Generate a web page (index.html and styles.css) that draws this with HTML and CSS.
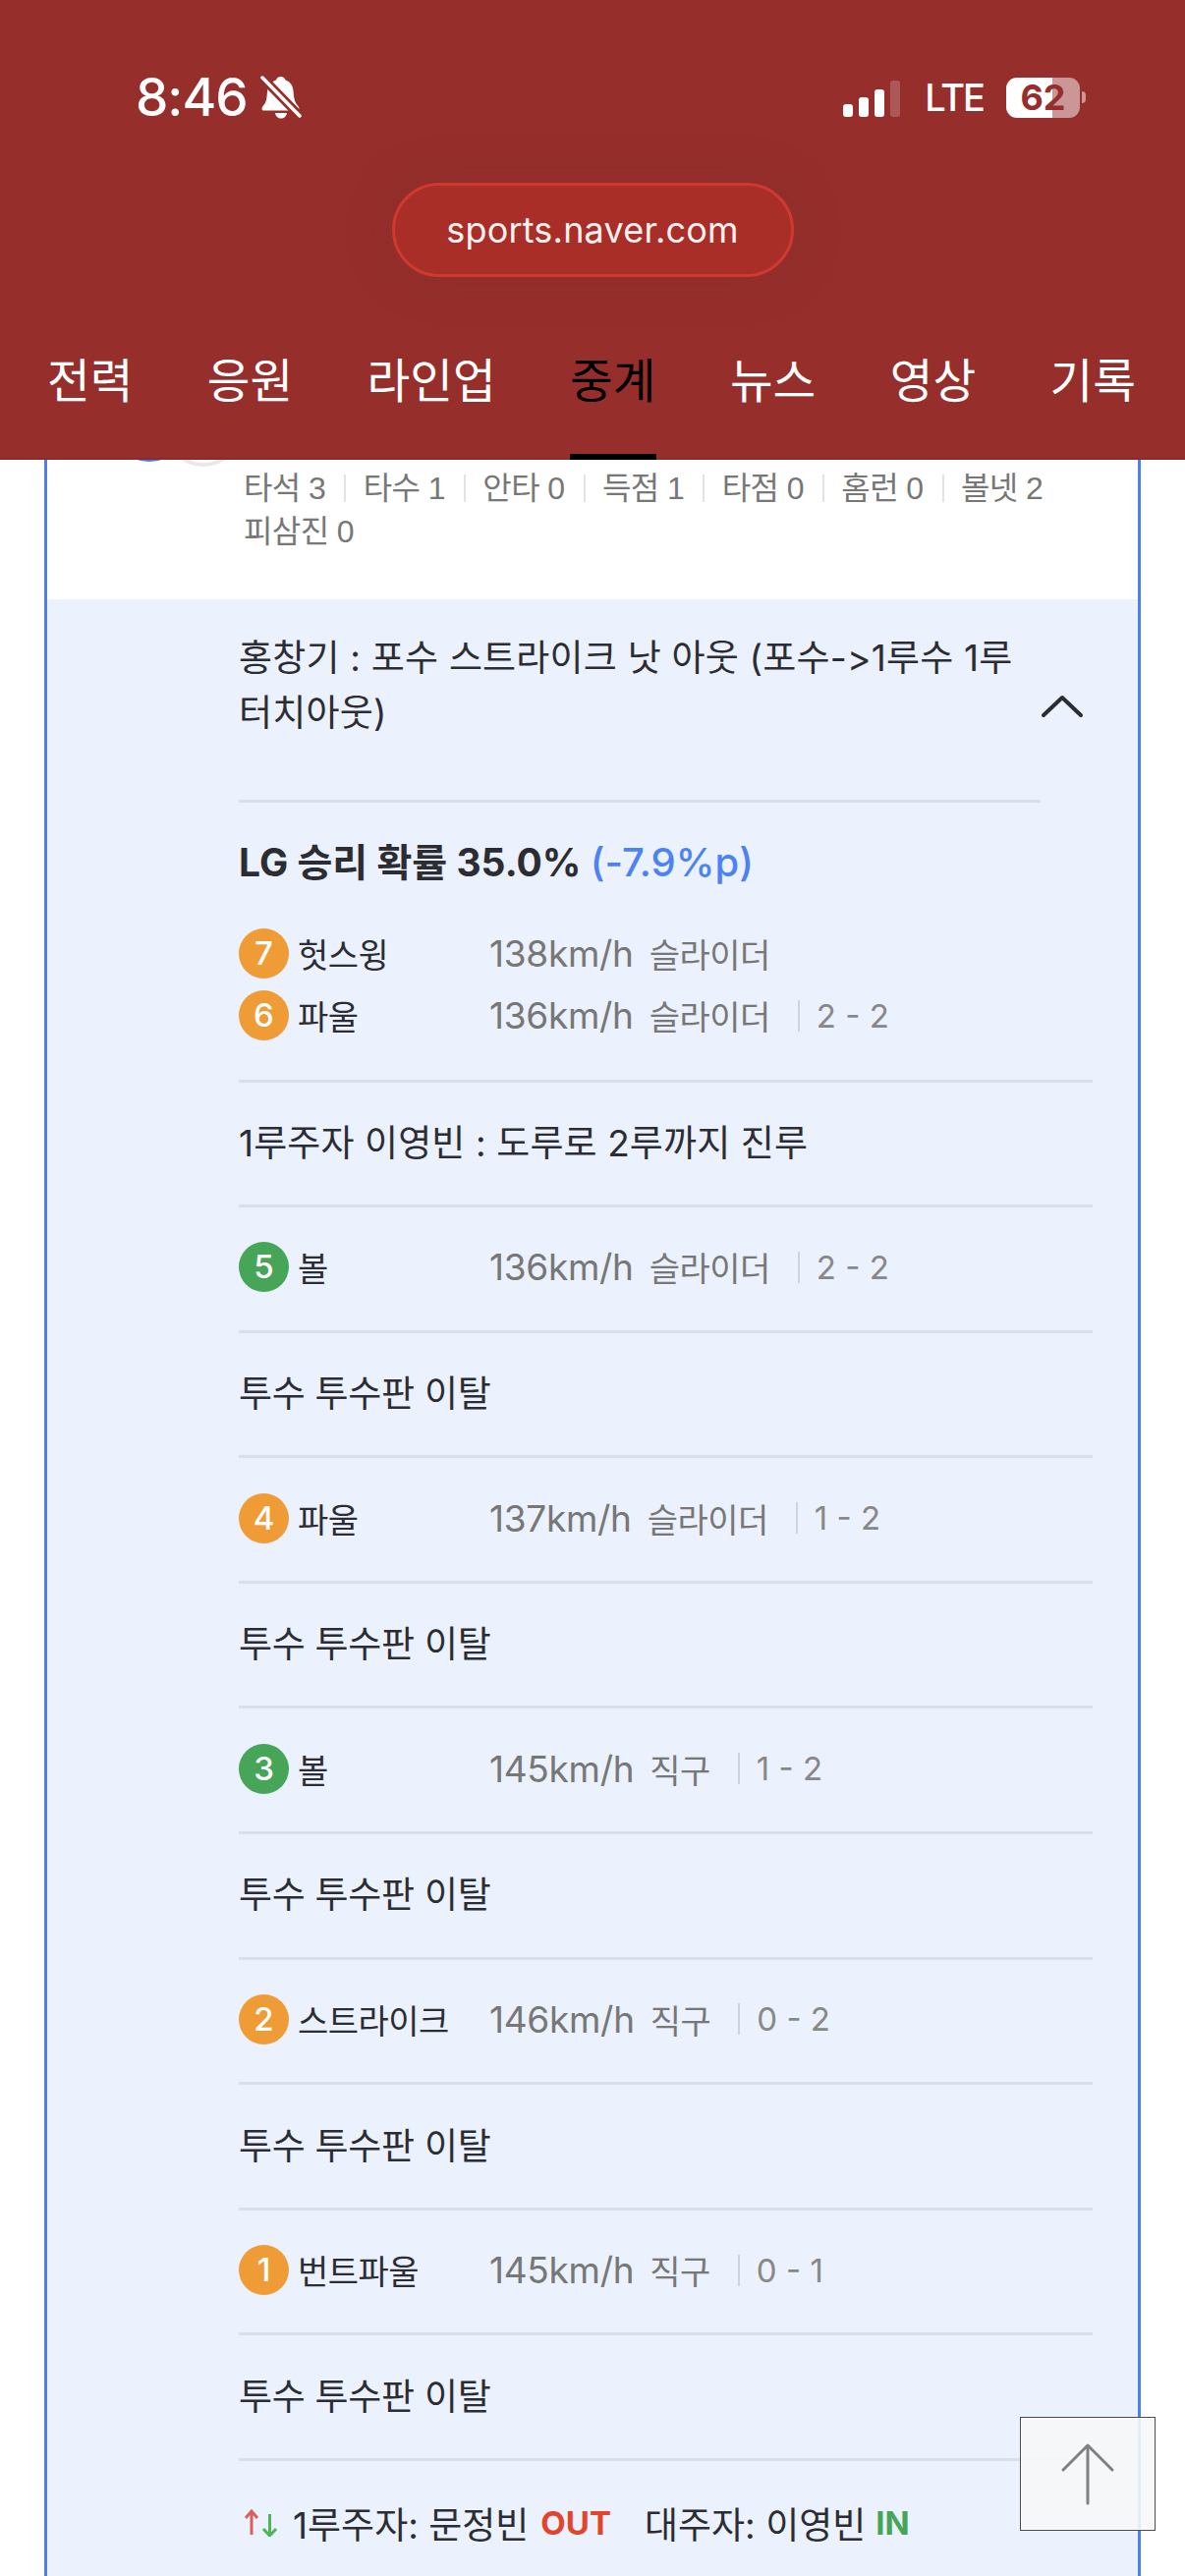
FILE: index.html
```html
<!DOCTYPE html>
<html lang="ko">
<head>
    <meta charset="utf-8">
    <title>sports.naver.com</title>
    <link rel="stylesheet" href="styles.css">
</head>
<body>
    <header class="header">
        <div class="status-bar">
            <div class="status-left">
                <span class="clock">8:46</span>
                <svg class="bell" width="42" height="44" viewBox="0 0 42 44">
                    <path d="M21 1c2 0 4 1.500 4.500 3.500 5 1.500 7.500 5.500 8 11 .5 6 1 10 3 13 1.500 2 3 3.500 3 5.500 0 1-1 1.500-2 1.500H4c-1.500 0-2.500-.5-2.500-1.500 0-2 1.500-3.500 3-5.500 2-3 2-7 2.500-12 .5-6 3.500-10 9-12C16.500 2 19 1 21 1z" fill="#fff"/>
                    <path d="M15 38h12c-.5 3.500-3 5.500-6 5.500s-5.500-2-6-5.500z" fill="#fff"/>
                    <path d="M2 2l38 39" stroke="#962f2c" stroke-width="9"/>
                    <path d="M2 2l38 39" stroke="#fff" stroke-width="3.500" stroke-linecap="round"/>
                </svg>
            </div>
            <div class="status-right">
                <div class="signal">
                    <i class="bar bar-1"></i>
                    <i class="bar bar-2"></i>
                    <i class="bar bar-3"></i>
                    <i class="bar bar-4"></i>
                </div>
                <span class="lte">LTE</span>
                <div class="battery"><span class="battery-num">62</span></div>
                <i class="battery-nub"></i>
            </div>
        </div>
        <div class="url-wrap">
            <div class="url-pill">sports.naver.com</div>
        </div>
        <nav class="tabs">
            <a class="tab">전력</a>
            <a class="tab">응원</a>
            <a class="tab">라인업</a>
            <a class="tab active">중계</a>
            <a class="tab">뉴스</a>
            <a class="tab">영상</a>
            <a class="tab">기록</a>
        </nav>
    </header>

    <main class="card">
        <div class="batter">
            <div class="avatars">
                <i class="avatar avatar-blue"></i>
                <i class="avatar avatar-gray"></i>
            </div>
            <ul class="stats">
                <li>타석 3</li>
                <li>타수 1</li>
                <li>안타 0</li>
                <li>득점 1</li>
                <li>타점 0</li>
                <li>홈런 0</li>
                <li>볼넷 2</li>
                <li>피삼진 0</li>
            </ul>
        </div>

        <section class="detail">
            <div class="result">
                <p class="result-text">홍창기 : 포수 스트라이크 낫 아웃 (포수-&gt;1루수 1루<br>터치아웃)</p>
                <svg class="chevron" width="44" height="24" viewBox="0 0 44 24">
                    <path d="M3 21L22 3l19 18" fill="none" stroke="#2b2d33" stroke-width="4" stroke-linecap="round" stroke-linejoin="round"/>
                </svg>
            </div>

            <div class="pitch-group">
                <p class="win-rate">LG 승리 확률 35.0% <span class="win-diff">(-7.9%p)</span></p>
                <div class="pitch">
                    <span class="num orange">7</span><span class="label">헛스윙</span>
                    <span class="speed">138km/h</span><span class="kind">슬라이더</span>
                </div>
                <div class="pitch">
                    <span class="num orange">6</span><span class="label">파울</span>
                    <span class="speed">136km/h</span><span class="kind">슬라이더</span><span class="count">2 - 2</span>
                </div>
            </div>

            <div class="row row-wide">1루주자 이영빈 : 도루로 2루까지 진루</div>
            <div class="row pitch">
                <span class="num green">5</span><span class="label">볼</span>
                <span class="speed">136km/h</span><span class="kind">슬라이더</span><span class="count">2 - 2</span>
            </div>
            <div class="row">투수 투수판 이탈</div>
            <div class="row pitch">
                <span class="num orange">4</span><span class="label">파울</span>
                <span class="speed">137km/h</span><span class="kind">슬라이더</span><span class="count">1 - 2</span>
            </div>
            <div class="row">투수 투수판 이탈</div>
            <div class="row pitch">
                <span class="num green">3</span><span class="label">볼</span>
                <span class="speed">145km/h</span><span class="kind">직구</span><span class="count">1 - 2</span>
            </div>
            <div class="row">투수 투수판 이탈</div>
            <div class="row pitch">
                <span class="num orange">2</span><span class="label">스트라이크</span>
                <span class="speed">146km/h</span><span class="kind">직구</span><span class="count">0 - 2</span>
            </div>
            <div class="row">투수 투수판 이탈</div>
            <div class="row pitch">
                <span class="num orange">1</span><span class="label">번트파울</span>
                <span class="speed">145km/h</span><span class="kind">직구</span><span class="count">0 - 1</span>
            </div>
            <div class="row">투수 투수판 이탈</div>
            <div class="row change">
                <svg class="swap" width="36" height="28" viewBox="0 0 36 28">
                    <path d="M9 26V2M3 9l6-7 6 7" fill="none" stroke="#d9605a" stroke-width="3"/>
                    <path d="M27.500 5v22M21 20l6.500 7 6.500-7" fill="none" stroke="#4fb556" stroke-width="3"/>
                </svg>
                <span>1루주자: 문정빈</span><b class="out">OUT</b>
                <span class="sub">대주자: 이영빈</span><b class="in">IN</b>
            </div>
        </section>
    </main>

    <button class="to-top">
        <svg width="56" height="64" viewBox="0 0 56 64">
            <path d="M28 62V3M3 28L28 3l25 25" fill="none" stroke="#808080" stroke-width="3" stroke-linecap="round" stroke-linejoin="round"/>
        </svg>
    </button>
</body>
</html>
```

FILE: styles.css
```css
html, body { margin: 0; padding: 0; height: 2622px; overflow: hidden; }
body { position: relative; background: #fff; color: #2b2d33; font-family: Inter, "Noto Sans CJK KR", sans-serif; }
p, ul { margin: 0; padding: 0; }
ul { list-style: none; }

/* top red area */
.header { position: relative; z-index: 2; height: 468px; box-sizing: border-box; background: #962f2c; border-bottom: 2px solid #8a2b28; }
.status-bar { display: flex; justify-content: space-between; padding: 77px 101px 0 138px; height: 44px; }
.status-left { display: flex; align-items: center; gap: 13px; }
.clock { font-size: 53px; font-weight: 500; line-height: 44px; color: #fff; letter-spacing: -1px; }
.status-right { display: flex; align-items: center; }
.signal { display: flex; align-items: flex-end; gap: 6px; height: 37px; margin-top: 2px; }
.bar { display: block; width: 10px; border-radius: 3px; background: #fff; }
.bar-1 { height: 13px; }
.bar-2 { height: 20px; }
.bar-3 { height: 28px; }
.bar-4 { height: 37px; background: rgba(255,255,255,0.2); }
.lte { font-size: 38px; font-weight: 500; line-height: 44px; letter-spacing: -2px; color: #fff; margin-left: 25px; margin-right: 23px; }
.battery { width: 75px; height: 41px; border-radius: 11px; text-align: center; background: linear-gradient(to right, #fff 63%, rgba(255,255,255,0.5) 63%); }
.battery-num { font-size: 36px; font-weight: 700; line-height: 41px; color: #962f2c; }
.battery-nub { display: block; width: 4px; height: 12px; margin-left: 2px; border-radius: 0 6px 6px 0; background: rgba(255,255,255,0.5); }

.url-wrap { display: flex; justify-content: center; padding-top: 65px; }
.url-pill { width: 409px; height: 96px; box-sizing: border-box; border: 3px solid #cf3a2e; border-radius: 48px; background: #a82e27; color: #f9f1f1; font-size: 36px; line-height: 90px; letter-spacing: 0.2px; text-align: center; box-shadow: 0 0 40px 10px rgba(120,40,40,0.18); }

.tabs { display: flex; gap: 75.400px; padding: 72px 0 0 48px; }
.tab { position: relative; font-size: 47.500px; line-height: 68px; color: #fff; white-space: nowrap; }
.tab.active { color: #000; }
.tab.active::after { content: ""; position: absolute; left: 0; right: 0; top: 108px; height: 6px; background: #000; }

/* card */
.card { margin: 0 45px; border-left: 3px solid #4d7fee; border-right: 3px solid #4d7fee; }
.batter { height: 142px; padding-left: 200px; font-family: "Liberation Sans", "Noto Sans CJK KR", sans-serif; }
.avatars { display: flex; height: 0; margin-left: -136px; }
.avatar { display: block; flex: none; width: 80px; height: 80px; margin-top: -78px; border-radius: 50%; box-sizing: border-box; }
.avatar-blue { border: 3px solid #4d7fee; }
.avatar-gray { border: 4px solid #e8e8e8; margin-left: -25px; margin-top: -73px; }
.stats { display: flex; flex-wrap: wrap; width: 880px; padding-top: 7px; font-size: 32px; line-height: 44px; color: #777; letter-spacing: -0.6px; }
.stats li { position: relative; margin-right: 38.500px; white-space: nowrap; }
.stats li:not(:last-child):not(:nth-child(7))::after { content: ""; position: absolute; right: -21px; top: 8px; height: 28px; width: 2px; background: #e3e3e3; }

.detail { background: #ebf1fd; padding: 0 46px 0 195px; height: 2100px; }
.result { display: flex; align-items: center; justify-content: space-between; width: 860px; height: 207px; }
.result-text { width: 816px; height: 207px; box-sizing: border-box; border-bottom: 3px solid #d9dfeb; padding-top: 32px; font-size: 37px; line-height: 56px; letter-spacing: 0.2px; }
.chevron { flex: none; position: relative; top: 5px; }

.pitch-group { height: 284.500px; box-sizing: border-box; padding-top: 36px; border-bottom: 3px solid #d9dfeb; }
.win-rate { font-size: 39px; line-height: 50px; font-weight: 700; margin-bottom: 36px; }
.win-diff { font-size: 40px; font-weight: 500; color: #4d82f2; }

.pitch { display: flex; align-items: center; height: 63px; font-size: 34px; }
.num { flex: none; width: 51px; height: 51px; border-radius: 50%; color: #fff; font-size: 33px; font-weight: 500; line-height: 51px; text-align: center; }
.orange { background: #f09c36; }
.green { background: #46a556; }
.label { width: 195px; margin-left: 9px; flex: none; letter-spacing: -0.5px; }
.speed { color: #777; font-size: 37px; margin-right: 16px; letter-spacing: -0.3px; }
.kind { color: #777; font-size: 34px; letter-spacing: -0.5px; }
.count { position: relative; margin-left: 47px; color: #888; font-size: 33px; }
.count::before { content: ""; position: absolute; left: -19px; top: 4px; bottom: 4px; width: 2px; background: #ced3dc; }

.row { display: flex; align-items: center; height: 127.600px; box-sizing: border-box; padding-bottom: 6px; border-bottom: 3px solid #d9dfeb; font-size: 37px; letter-spacing: -0.3px; }
.row-wide { letter-spacing: 0.1px; }
.row.pitch { font-size: 34px; padding-bottom: 3px; letter-spacing: 0; }
.change { border-bottom: 0; padding-bottom: 2px; letter-spacing: 0; }
.swap { margin-left: 4px; margin-right: 15px; flex: none; }
.out { color: #e1452b; font-size: 33px; margin-left: 12px; }
.in { color: #46a556; font-size: 33px; margin-left: 10px; }
.sub { margin-left: 34px; }

.to-top { position: fixed; left: 1038px; top: 2460px; width: 138px; height: 116px; padding: 0; display: flex; align-items: center; justify-content: center; background: rgba(246,247,248,0.9); border: 1px solid #4a4a4a; box-shadow: inset 0 0 0 1px rgba(255,255,255,0.8); }
```
